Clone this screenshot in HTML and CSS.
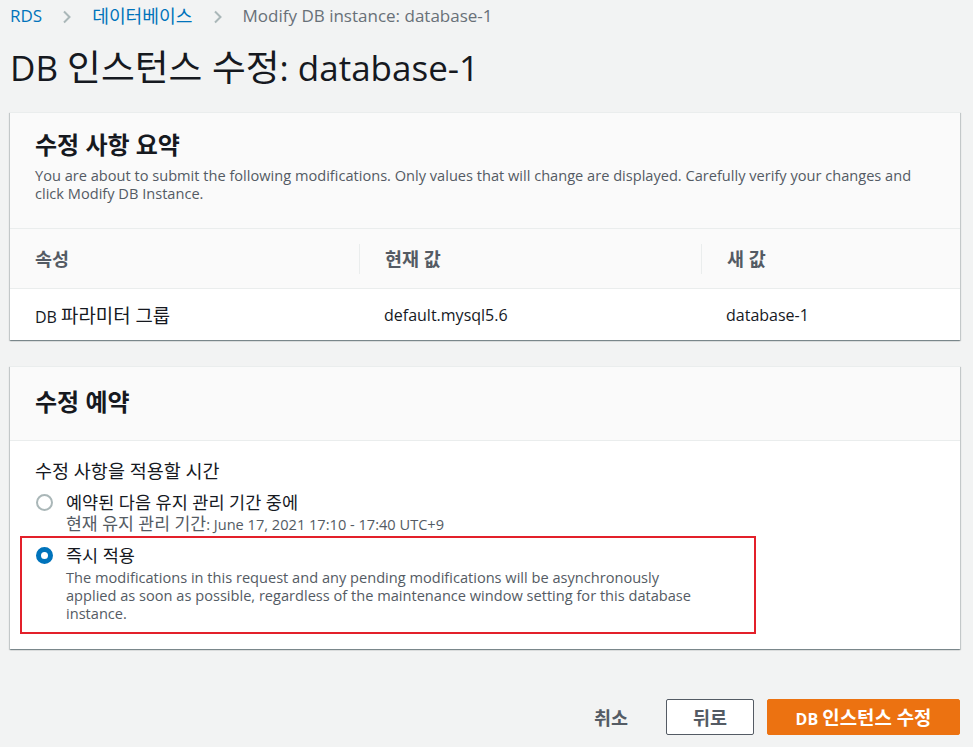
FILE: index.html
```html
<!DOCTYPE html>
<html lang="ko">
<head>
<meta charset="utf-8">
<title>DB 인스턴스 수정</title>
<link rel="stylesheet" href="styles.css">
</head>
<body>
<div class="page">
  <nav class="breadcrumb">
    <a class="crumb-link" href="#">RDS</a>
    <svg class="chev" width="10" height="14" viewBox="0 0 10 14"><path d="M2 1.5 L7.5 7 L2 12.5" fill="none" stroke="#aab7b8" stroke-width="2"/></svg>
    <a class="crumb-link" href="#"><span class="ko">데이터베이스</span></a>
    <svg class="chev" width="10" height="14" viewBox="0 0 10 14"><path d="M2 1.5 L7.5 7 L2 12.5" fill="none" stroke="#aab7b8" stroke-width="2"/></svg>
    <span class="crumb-current">Modify DB instance: database-1</span>
  </nav>

  <h1 class="page-title">DB <span class="ko">인스턴스 수정</span>: database-1</h1>

  <section class="card">
    <div class="card-header">
      <h2 class="card-title">수정 사항 요약</h2>
      <p class="card-desc">You are about to submit the following modifications. Only values that will change are displayed. Carefully verify your changes and click Modify DB Instance.</p>
    </div>
    <div class="table">
      <div class="th"><span>속성</span></div>
      <div class="th sep"><span>현재 값</span></div>
      <div class="th sep"><span>새 값</span></div>
      <div class="td"><span>DB <span class="ko">파라미터 그룹</span></span></div>
      <div class="td"><span>default.mysql5.6</span></div>
      <div class="td"><span>database-1</span></div>
    </div>
  </section>

  <section class="card card-2">
    <div class="card-header short">
      <h2 class="card-title">수정 예약</h2>
    </div>
    <div class="card-body">
      <div class="field-label">수정 사항을 적용할 시간</div>
      <div class="option">
        <span class="radio"></span>
        <div class="option-text">
          <div class="option-label">예약된 다음 유지 관리 기간 중에</div>
          <div class="option-sub"><span class="ko">현재 유지 관리 기간</span>: June 17, 2021 17:10 - 17:40 UTC+9</div>
        </div>
      </div>
      <div class="option highlighted">
        <span class="radio checked"></span>
        <div class="option-text">
          <div class="option-label">즉시 적용</div>
          <div class="option-sub">The modifications in this request and any pending modifications will be asynchronously applied as soon as possible, regardless of the maintenance window setting for this database instance.</div>
        </div>
      </div>
    </div>
  </section>

  <div class="actions">
    <button class="btn btn-link">취소</button>
    <button class="btn btn-normal">뒤로</button>
    <button class="btn btn-primary">DB <span class="ko">인스턴스 수정</span></button>
  </div>
</div>
</body>
</html>
```

FILE: styles.css
```css
* { box-sizing: border-box; }

body {
  margin: 0;
  background: #f2f3f3;
  font-family: "Open Sans", "Noto Sans CJK KR", sans-serif;
  color: #16191f;
}

.ko {
  font-size: 1.14em;
}

.page {
  padding: 6px 13px 0 10px;
}

.breadcrumb {
  display: flex;
  align-items: center;
  height: 20px;
  font-size: 17px;
  line-height: 20px;
}

.breadcrumb .ko {
  font-size: 1.07em;
}

.crumb-link {
  color: #0073bb;
  text-decoration: none;
}

.chev {
  margin: 2px 20px 0 20px;
}

.crumb-current {
  color: #687078;
}

.page-title {
  margin: 21px 0 24px 0;
  font-size: 35px;
  line-height: 40px;
  font-weight: 400;
  color: #16191f;
}

.page-title .ko {
  font-size: 1.05em;
}

.card {
  background: #fff;
  border-top: 1px solid #eaeded;
  box-shadow: 0 1px 1px 0 rgba(0, 28, 36, 0.3), 1px 1px 1px 0 rgba(0, 28, 36, 0.15), -1px 1px 1px 0 rgba(0, 28, 36, 0.15);
}

.card-2 {
  margin-top: 26px;
}

.card-header {
  background: #fafafa;
  padding: 17px 25px 26px 25px;
  border-bottom: 1px solid #eaeded;
}

.card-header.short {
  padding: 20px 25px 23px 25px;
}

.card-title {
  margin: 0;
  font-size: 24px;
  line-height: 30px;
  font-weight: 700;
}

.card-desc {
  margin: 6px 0 0 0;
  font-size: 14.6px;
  line-height: 18px;
  color: #545b64;
  max-width: 895px;
}

.table {
  display: grid;
  grid-template-columns: 349px 342px 1fr;
}

.th {
  background: #fafafa;
  height: 60px;
  display: flex;
  align-items: center;
  border-bottom: 1px solid #eaeded;
  font-size: 18.5px;
  font-weight: 700;
  color: #545b64;
}

.th span {
  padding-left: 25px;
  line-height: 30px;
}

.th.sep span {
  border-left: 1px solid #eaeded;
}

.td {
  height: 51px;
  display: flex;
  align-items: center;
  padding-left: 25px;
  font-size: 16px;
}

.td .ko {
  font-size: 1.18em;
}

.card-body {
  padding: 19px 25px 15px 25px;
}

.field-label {
  font-size: 18.5px;
  line-height: 22px;
  color: #16191f;
  margin-bottom: 9px;
}

.option {
  display: flex;
  align-items: flex-start;
  gap: 13px;
  padding-left: 1px;
}

.option.highlighted {
  margin: 3px 0 0 -15px;
  width: 736px;
  border: 2px solid #e3202a;
  padding: 6px 0 10px 14px;
}

.option.highlighted .option-sub {
  max-width: 636px;
}

.radio {
  flex: none;
  width: 17px;
  height: 17px;
  margin-top: 3px;
  border-radius: 50%;
  border: 2px solid #aab7b8;
  background: #fff;
}

.radio.checked {
  border: 5px solid #0073bb;
}

.option-label {
  font-size: 17.5px;
  line-height: 22px;
  color: #16191f;
}

.option-sub {
  font-size: 14.6px;
  line-height: 18px;
  color: #545b64;
  margin-top: 2px;
}

.option-sub .ko {
  font-size: 1.18em;
}

.actions {
  display: flex;
  justify-content: flex-end;
  align-items: center;
  gap: 13px;
  margin-top: 50px;
}

.btn {
  height: 36px;
  font-family: "Open Sans", "Noto Sans CJK KR", sans-serif;
  font-size: 16px;
  font-weight: 700;
  border-radius: 2px;
  cursor: pointer;
}

.btn .ko {
  font-size: 1.18em;
}

.btn-link,
.btn-normal {
  font-size: 18.5px;
}

.btn-link {
  background: transparent;
  border: none;
  color: #545b64;
  padding: 0 20px;
  margin-right: 5px;
}

.btn-normal {
  width: 88px;
  background: #fff;
  border: 1px solid #545b64;
  color: #545b64;
}

.btn-primary {
  width: 193px;
  background: #ec7211;
  border: 1px solid #ec7211;
  color: #fff;
}
```
